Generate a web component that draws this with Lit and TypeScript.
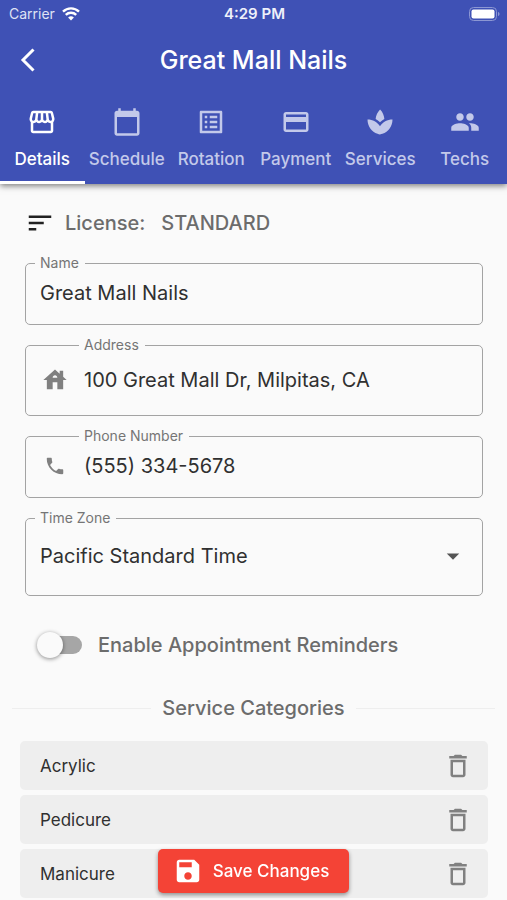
import { LitElement, html, css, svg } from "lit";
import { customElement, property, state } from "lit/decorators.js";

const ICONS: Record<string, string> = {
  store:
    "M21.9 8.89l-1.05-4.37c-.22-.9-1-1.52-1.91-1.52H5.05c-.9 0-1.69.63-1.9 1.52L2.1 8.89c-.24 1.02-.02 2.06.62 2.88.08.11.19.19.28.29V19c0 1.1.9 2 2 2h14c1.1 0 2-.9 2-2v-6.94c.09-.09.2-.18.28-.28.64-.82.87-1.87.62-2.89zm-2.99-3.9l1.05 4.37c.1.42.01.84-.25 1.17-.14.18-.44.47-.94.47-.61 0-1.14-.49-1.21-1.14L16.98 5l1.93-.01zM13 5h1.96l.54 4.52c.05.39-.07.78-.33 1.07-.22.26-.54.41-.95.41-.67 0-1.22-.59-1.22-1.31V5zM8.49 9.52L9.04 5H11v4.69c0 .72-.55 1.31-1.29 1.31-.34 0-.65-.15-.89-.41-.25-.29-.37-.68-.33-1.07zm-4.45-.16L5.05 5h1.97l-.58 4.86c-.08.65-.6 1.14-1.21 1.14-.49 0-.8-.29-.93-.47-.27-.32-.36-.75-.26-1.17zM5 19v-6.03c.08.01.15.03.23.03.87 0 1.66-.36 2.24-.95.6.6 1.4.95 2.31.95.87 0 1.65-.36 2.23-.93.59.57 1.39.93 2.29.93.84 0 1.64-.35 2.24-.95.58.59 1.37.95 2.24.95.08 0 .15-.02.23-.03V19H5z",
  calendar:
    "M20 3h-1V1h-2v2H7V1H5v2H4c-1.1 0-2 .9-2 2v16c0 1.1.9 2 2 2h16c1.1 0 2-.9 2-2V5c0-1.1-.9-2-2-2zm0 18H4V8h16v13z",
  list:
    "M19 5v14H5V5h14m1.1-2H3.9c-.5 0-.9.4-.9.9v16.2c0 .4.4.9.9.9h16.2c.4 0 .9-.5.9-.9V3.9c0-.5-.5-.9-.9-.9zM11 7h6v2h-6V7zm0 4h6v2h-6v-2zm0 4h6v2h-6zM7 7h2v2H7zm0 4h2v2H7zm0 4h2v2H7z",
  card:
    "M20 4H4c-1.11 0-1.99.89-1.99 2L2 18c0 1.11.89 2 2 2h16c1.11 0 2-.89 2-2V6c0-1.11-.89-2-2-2zm0 14H4v-6h16v6zm0-10H4V6h16v2z",
  spa:
    "M15.49 9.63c-.18-2.79-1.31-5.51-3.43-7.63-2.14 2.14-3.32 4.86-3.55 7.63 1.28.68 2.46 1.56 3.49 2.63 1.03-1.06 2.21-1.94 3.49-2.63zM12 15.45C9.85 12.17 6.18 10 2 10c0 5.32 3.36 9.82 8.03 11.49.63.23 1.29.4 1.97.51.68-.12 1.33-.29 1.97-.51C18.64 19.82 22 15.32 22 10c-4.18 0-7.85 2.17-10 5.45z",
  people:
    "M16 11c1.66 0 2.99-1.34 2.99-3S17.66 5 16 5c-1.66 0-3 1.34-3 3s1.34 3 3 3zm-8 0c1.66 0 2.99-1.34 2.99-3S9.66 5 8 5C6.34 5 5 6.34 5 8s1.34 3 3 3zm0 2c-2.33 0-7 1.17-7 3.5V19h14v-2.5c0-2.33-4.67-3.5-7-3.5zm8 0c-.29 0-.62.02-.97.05 1.16.84 1.97 1.97 1.97 3.45V19h6v-2.5c0-2.33-4.67-3.5-7-3.5z",
  sort: "M3 18h6v-2H3v2zM3 6v2h18V6H3zm0 7h12v-2H3v2z",
  house:
    "M19 9.3V4h-3v2.6L12 3 2 12h3v8h5v-6h4v6h5v-8h3l-3-2.7zm-9 .7c0-1.1.9-2 2-2s2 .9 2 2h-4z",
  phone:
    "M6.62 10.79c1.44 2.83 3.76 5.14 6.59 6.59l2.2-2.2c.27-.27.67-.36 1.02-.24 1.12.37 2.33.57 3.57.57.55 0 1 .45 1 1V20c0 .55-.45 1-1 1-9.39 0-17-7.61-17-17 0-.55.45-1 1-1h3.5c.55 0 1 .45 1 1 0 1.25.2 2.45.57 3.57.11.35.03.74-.25 1.02l-2.2 2.2z",
  trash:
    "M6 19c0 1.1.9 2 2 2h8c1.1 0 2-.9 2-2V7H6v12zM8 9h8v10H8V9zm7.5-5l-1-1h-5l-1 1H5v2h14V4z",
  save:
    "M17 3H5c-1.11 0-2 .9-2 2v14c0 1.1.89 2 2 2h14c1.1 0 2-.9 2-2V7l-4-4zm-5 16c-1.66 0-3-1.34-3-3s1.34-3 3-3 3 1.34 3 3-1.34 3-3 3zm3-10H5V5h10v4z",
  caret: "M7 10l5 5 5-5z",
};

@customElement("md-icon")
class MdIcon extends LitElement {
  @property() name = "";

  static styles = css`
    :host {
      display: block;
      flex: none;
      width: 30px;
      height: 30px;
    }
    .glyph {
      display: block;
      width: 100%;
      height: 100%;
      fill: currentColor;
    }
  `;

  render() {
    return html`<svg class="glyph" viewBox="0 0 24 24" aria-hidden="true">
      ${svg`<path d=${ICONS[this.name] ?? ""}></path>`}
    </svg>`;
  }
}

const TABS = [
  { icon: "store", label: "Details" },
  { icon: "calendar", label: "Schedule" },
  { icon: "list", label: "Rotation" },
  { icon: "card", label: "Payment" },
  { icon: "spa", label: "Services" },
  { icon: "people", label: "Techs" },
];

@customElement("app-root")
class AppRoot extends LitElement {
  @state() private tab = 0;
  @state() private categories = ["Acrylic", "Pedicure", "Manicure"];

  static styles = css`
    :host {
      display: block;
      min-height: 100vh;
      background: #fafafa;
      color: #303030;
      font-family: Inter, "Liberation Sans", sans-serif;
      font-size: 20px;
    }
    * {
      box-sizing: border-box;
    }
    button {
      font: inherit;
      color: inherit;
      background: none;
      border: 0;
      padding: 0;
      cursor: pointer;
    }

    .top {
      background: #3f51b5;
      color: #fff;
      box-shadow: 0 2px 6px rgba(0, 0, 0, 0.5);
    }
    .status {
      display: grid;
      grid-template-columns: 1fr auto 1fr;
      align-items: center;
      height: 28px;
      padding: 0 7px 0 9px;
      font-size: 14px;
      line-height: 20px;
    }
    .carrier {
      display: flex;
      align-items: center;
      gap: 7px;
      color: #dfe2f4;
    }
    .wifi {
      width: 18px;
      height: 14px;
    }
    .clock {
      font-size: 15px;
      font-weight: 600;
      color: #eef0fa;
    }
    .battery {
      justify-self: end;
      width: 31px;
      height: 14px;
    }
    .bar {
      display: grid;
      grid-template-columns: 48px 1fr 48px;
      align-items: center;
      height: 64px;
      padding: 0 4px;
    }
    .back {
      display: flex;
      align-items: center;
      justify-content: center;
      height: 48px;
    }
    .chevron {
      width: 16px;
      height: 26px;
    }
    .title {
      margin: 0;
      text-align: center;
      font-size: 25px;
      line-height: 32px;
      font-weight: 500;
    }
    .tabs {
      display: grid;
      grid-template-columns: repeat(6, 1fr);
    }
    .tab {
      display: flex;
      flex-direction: column;
      align-items: center;
      gap: 11px;
      height: 92px;
      padding-top: 15px;
      border-bottom: 3px solid transparent;
      font-size: 17px;
      line-height: 22px;
      font-weight: 500;
      color: #c3c9ea;
    }
    .tab.active {
      color: #fff;
      border-color: #fff;
    }

    .details {
      display: flex;
      flex-direction: column;
      gap: 12px;
      padding: 24px 24px 0 25px;
    }
    .license {
      display: flex;
      align-items: center;
      gap: 10px;
      height: 30px;
      margin-bottom: 5px;
      font-weight: 500;
      color: #6c6c6c;
    }
    .license md-icon {
      color: #212121;
    }
    .plan {
      margin-left: 6px;
    }

    .field {
      display: flex;
      align-items: center;
      min-width: 0;
      margin: 0;
      padding: 1px 14px 10px;
      border: 1px solid #a3a3a3;
      border-radius: 5px;
    }
    .field legend {
      height: 16px;
      margin-left: -5px;
      padding: 0 6px 0 5px;
      font-size: 14px;
      line-height: 16px;
      color: #757575;
    }
    .field.with-icon {
      padding-left: 15px;
    }
    .field.with-icon legend {
      margin-left: 38px;
    }
    .lead {
      display: flex;
      justify-content: center;
      width: 28px;
      margin-right: 15px;
      color: #808080;
    }
    .lead .house {
      width: 28px;
      height: 28px;
    }
    .lead .phone {
      width: 22px;
      height: 22px;
    }
    .control {
      flex: 1;
      min-width: 0;
      width: 100%;
      height: 42px;
      padding: 0;
      border: 0;
      outline: 0;
      background: none;
      color: inherit;
      font: inherit;
    }
    .control.tall {
      height: 51px;
    }
    .control.select {
      height: 58px;
      appearance: none;
    }
    .field .caret {
      color: #555;
      pointer-events: none;
    }

    .reminders {
      display: flex;
      align-items: center;
      gap: 16px;
      margin: 18px 0 0 16px;
      height: 38px;
      font-weight: 500;
      color: #6c6c6c;
    }
    .switch {
      appearance: none;
      display: flex;
      flex: none;
      align-items: center;
      width: 41px;
      height: 18px;
      margin: 0;
      background: #a6a6a6;
      border-radius: 9px;
      cursor: pointer;
    }
    .switch::before {
      content: "";
      flex: none;
      width: 26px;
      height: 26px;
      margin: 0 -4px;
      border-radius: 50%;
      background: #fafafa;
      box-shadow: 0 1px 4px rgba(0, 0, 0, 0.45);
    }
    .switch:checked {
      justify-content: flex-end;
    }

    .section {
      display: flex;
      align-items: center;
      gap: 11px;
      margin: 32px 12px 21px;
      font-size: 20px;
      line-height: 24px;
      font-weight: 500;
      color: #6c6c6c;
    }
    .section::before,
    .section::after {
      content: "";
      flex: 1;
      height: 1px;
      background: #eee;
    }
    .categories {
      display: flex;
      flex-direction: column;
      gap: 5px;
      margin: 0;
      padding: 0 19px 0 20px;
      list-style: none;
    }
    .category {
      display: flex;
      align-items: center;
      justify-content: space-between;
      height: 49px;
      padding: 0 15px 0 20px;
      border-radius: 5px;
      background: #eee;
      font-size: 17px;
    }
    .remove {
      color: #808080;
    }

    .dock {
      position: fixed;
      left: 0;
      right: 0;
      bottom: 7px;
      display: flex;
      justify-content: center;
      pointer-events: none;
    }
    .save {
      display: flex;
      align-items: center;
      gap: 10px;
      height: 44px;
      padding: 0 20px 0 15px;
      border-radius: 5px;
      background: #f44336;
      color: #fff;
      font-size: 17px;
      font-weight: 500;
      box-shadow: 0 2px 4px rgba(0, 0, 0, 0.4);
      pointer-events: auto;
    }
  `;

  private remove(name: string) {
    this.categories = this.categories.filter((c) => c !== name);
  }

  private renderStatus() {
    return html`<div class="status">
      <span class="carrier">
        Carrier
        <svg class="wifi" viewBox="0 0 18 14" aria-label="Wi-Fi">
          <path
            d="M1 4.6a11.6 11.6 0 0 1 16 0M3.8 7.9a7.4 7.4 0 0 1 10.4 0"
            fill="none"
            stroke="#fff"
            stroke-width="2.4"
          ></path>
          <path d="M9 13.6l-2.9-3a4.1 4.1 0 0 1 5.8 0z" fill="#fff"></path>
        </svg>
      </span>
      <span class="clock">4:29 PM</span>
      <svg class="battery" viewBox="0 0 31 14" aria-label="Battery full">
        <rect x=".5" y=".5" width="27" height="13" rx="4" fill="none" stroke="#8c97d3"></rect>
        <rect x="2.5" y="2.5" width="23" height="9" rx="2" fill="#fff"></rect>
        <path d="M29 5c2 .6 2 3.4 0 4z" fill="#8c97d3"></path>
      </svg>
    </div>`;
  }

  render() {
    return html`
      <header class="top">
        ${this.renderStatus()}
        <div class="bar">
          <button class="back" aria-label="Back">
            <svg class="chevron" viewBox="0 0 16 26">
              <path d="M13.5 2.5L3 13l10.5 10.5" fill="none" stroke="#fff" stroke-width="3"></path>
            </svg>
          </button>
          <h1 class="title">Great Mall Nails</h1>
        </div>
        <nav class="tabs" role="tablist">
          ${TABS.map(
            (t, i) => html`<button
              class="tab ${i === this.tab ? "active" : ""}"
              role="tab"
              aria-selected=${i === this.tab ? "true" : "false"}
              @click=${() => (this.tab = i)}
            >
              <md-icon name=${t.icon}></md-icon>
              <span>${t.label}</span>
            </button>`
          )}
        </nav>
      </header>

      <main>
        <form class="details">
          <div class="license">
            <md-icon name="sort"></md-icon>
            <span>License:</span>
            <span class="plan">STANDARD</span>
          </div>
          <fieldset class="field">
            <legend><label for="name">Name</label></legend>
            <input class="control" id="name" value="Great Mall Nails" />
          </fieldset>
          <fieldset class="field with-icon">
            <legend><label for="address">Address</label></legend>
            <span class="lead"><md-icon class="house" name="house"></md-icon></span>
            <input class="control tall" id="address" value="100 Great Mall Dr, Milpitas, CA" />
          </fieldset>
          <fieldset class="field with-icon">
            <legend><label for="phone">Phone Number</label></legend>
            <span class="lead"><md-icon class="phone" name="phone"></md-icon></span>
            <input class="control" id="phone" type="tel" value="(555) 334-5678" />
          </fieldset>
          <fieldset class="field">
            <legend><label for="zone">Time Zone</label></legend>
            <select class="control select" id="zone">
              <option>Pacific Standard Time</option>
            </select>
            <md-icon class="caret" name="caret"></md-icon>
          </fieldset>
          <label class="reminders">
            <input class="switch" type="checkbox" role="switch" />
            Enable Appointment Reminders
          </label>
        </form>

        <h2 class="section">Service Categories</h2>
        <ul class="categories">
          ${this.categories.map(
            (c) => html`<li class="category">
              ${c}
              <button class="remove" aria-label="Delete ${c}" @click=${() => this.remove(c)}>
                <md-icon name="trash"></md-icon>
              </button>
            </li>`
          )}
        </ul>
      </main>

      <div class="dock">
        <button class="save"><md-icon name="save"></md-icon>Save Changes</button>
      </div>
    `;
  }
}
